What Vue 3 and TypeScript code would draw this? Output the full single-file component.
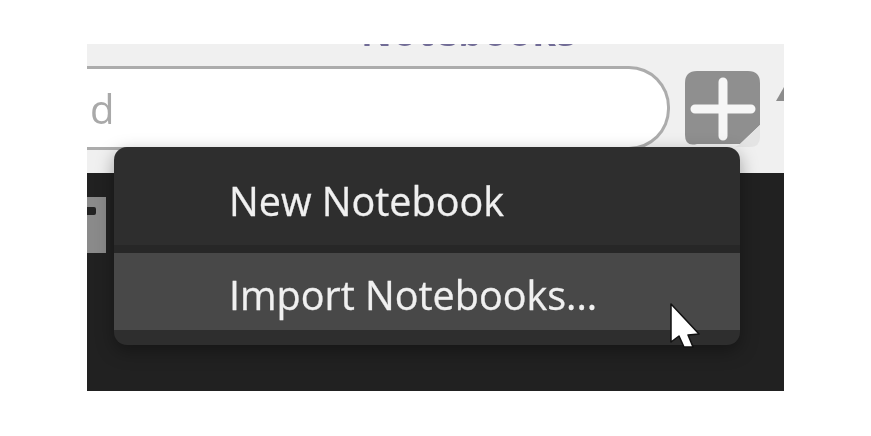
<script setup lang="ts">
const items: { label: string; hover: boolean }[] = [
  { label: 'New Notebook', hover: false },
  { label: 'Import Notebooks...', hover: true },
]
</script>

<template>
  <div class="page">
    <div class="app">
      <div class="toolbar">
        <div class="title">Notebooks</div>
        <div class="row">
          <div class="search"><span class="placeholder">d</span></div>
          <svg class="add" width="75" height="76" viewBox="0 0 75 76">
            <path d="M12 0H63Q75 0 75 12V54L55 73H12Q0 76 0 64V12Q0 0 12 0Z" fill="#8f8f8f" />
            <path d="M75 54V66Q75 76 65 76H50L55 73Z" fill="#e4e4e4" />
            <path d="M38 11V65M10 38H66" stroke="#f6f6f6" stroke-width="9" stroke-linecap="round" />
          </svg>
          <svg class="arrow" width="8" height="14" viewBox="0 0 8 14">
            <path d="M8 0V14H0Z" fill="#8c8c8c" />
          </svg>
        </div>
      </div>
      <div class="content">
        <div class="thumb"><span class="dot"></span></div>
      </div>
      <div class="menu">
        <div v-for="item in items" :key="item.label" class="item" :class="{ hover: item.hover }">{{ item.label }}</div>
      </div>
      <svg class="cursor" width="30" height="46" viewBox="0 0 30 46">
        <path d="M1 1V39L9 33L14 44H23L18 32L29 31Z" fill="#fff" stroke="#111" stroke-width="1.5" stroke-linejoin="round" />
      </svg>
    </div>
  </div>
</template>

<style>
html, body { margin: 0; background: #fff; }
</style>

<style scoped>
.page {
  width: 871px;
  height: 436px;
  padding: 44px 0 0 87px;
  box-sizing: border-box;
  background: #fff;
  overflow: hidden;
  filter: blur(0.45px);
}
.app {
  position: relative;
  width: 697px;
  height: 347px;
  background: #212121;
  font-family: "Open Sans", "Noto Sans", sans-serif;
  overflow: hidden;
}
.toolbar {
  position: relative;
  height: 129px;
  background: #f0f0f0;
  overflow: hidden;
}
.title {
  position: absolute;
  left: 274px;
  top: -39px;
  font-size: 38px;
  font-weight: 700;
  color: #716c96;
  letter-spacing: 1px;
  white-space: nowrap;
}
.row {
  display: flex;
  align-items: flex-start;
  padding-top: 22px;
}
.search {
  width: 613px;
  height: 84px;
  margin-left: -30px;
  padding: 2px 0 0 33px;
  box-sizing: border-box;
  background: #fff;
  border: 3px solid #acacac;
  border-radius: 0 41px 41px 0;
  border-left: 0;
  display: flex;
  align-items: center;
  flex: none;
}
.placeholder {
  font-size: 40px;
  color: #a9a9a9;
  line-height: 1;
}
.add {
  flex: none;
  margin: 5px 0 0 15px;
}
.arrow {
  flex: none;
  margin: 21px 0 0 16px;
}
.content {
  height: 218px;
  background: #212121;
}
.thumb {
  position: relative;
  top: 24px;
  width: 19px;
  height: 56px;
  background: #8a8a8a;
}
.dot {
  position: absolute;
  left: 0;
  top: 10px;
  width: 9px;
  height: 8px;
  border-radius: 0 2px 2px 0;
  background: #222;
}
.menu {
  position: absolute;
  left: 27px;
  top: 103px;
  width: 626px;
  height: 198px;
  background: #2e2e2e;
  border-radius: 13px;
  box-shadow: 0 6px 18px rgba(0, 0, 0, 0.35);
  overflow: hidden;
  color: #f0f0f0;
  font-size: 39.5px;
  -webkit-text-stroke: 0.3px #f0f0f0;
}
.item {
  height: 106px;
  padding-left: 115px;
  line-height: 108px;
  box-sizing: border-box;
  white-space: nowrap;
  border-bottom: 8px solid #272727;
}
.item.hover {
  height: 77px;
  line-height: 84px;
  background: #484848;
  border-bottom: 0;
}
.cursor {
  position: absolute;
  left: 583px;
  top: 259px;
}
</style>
